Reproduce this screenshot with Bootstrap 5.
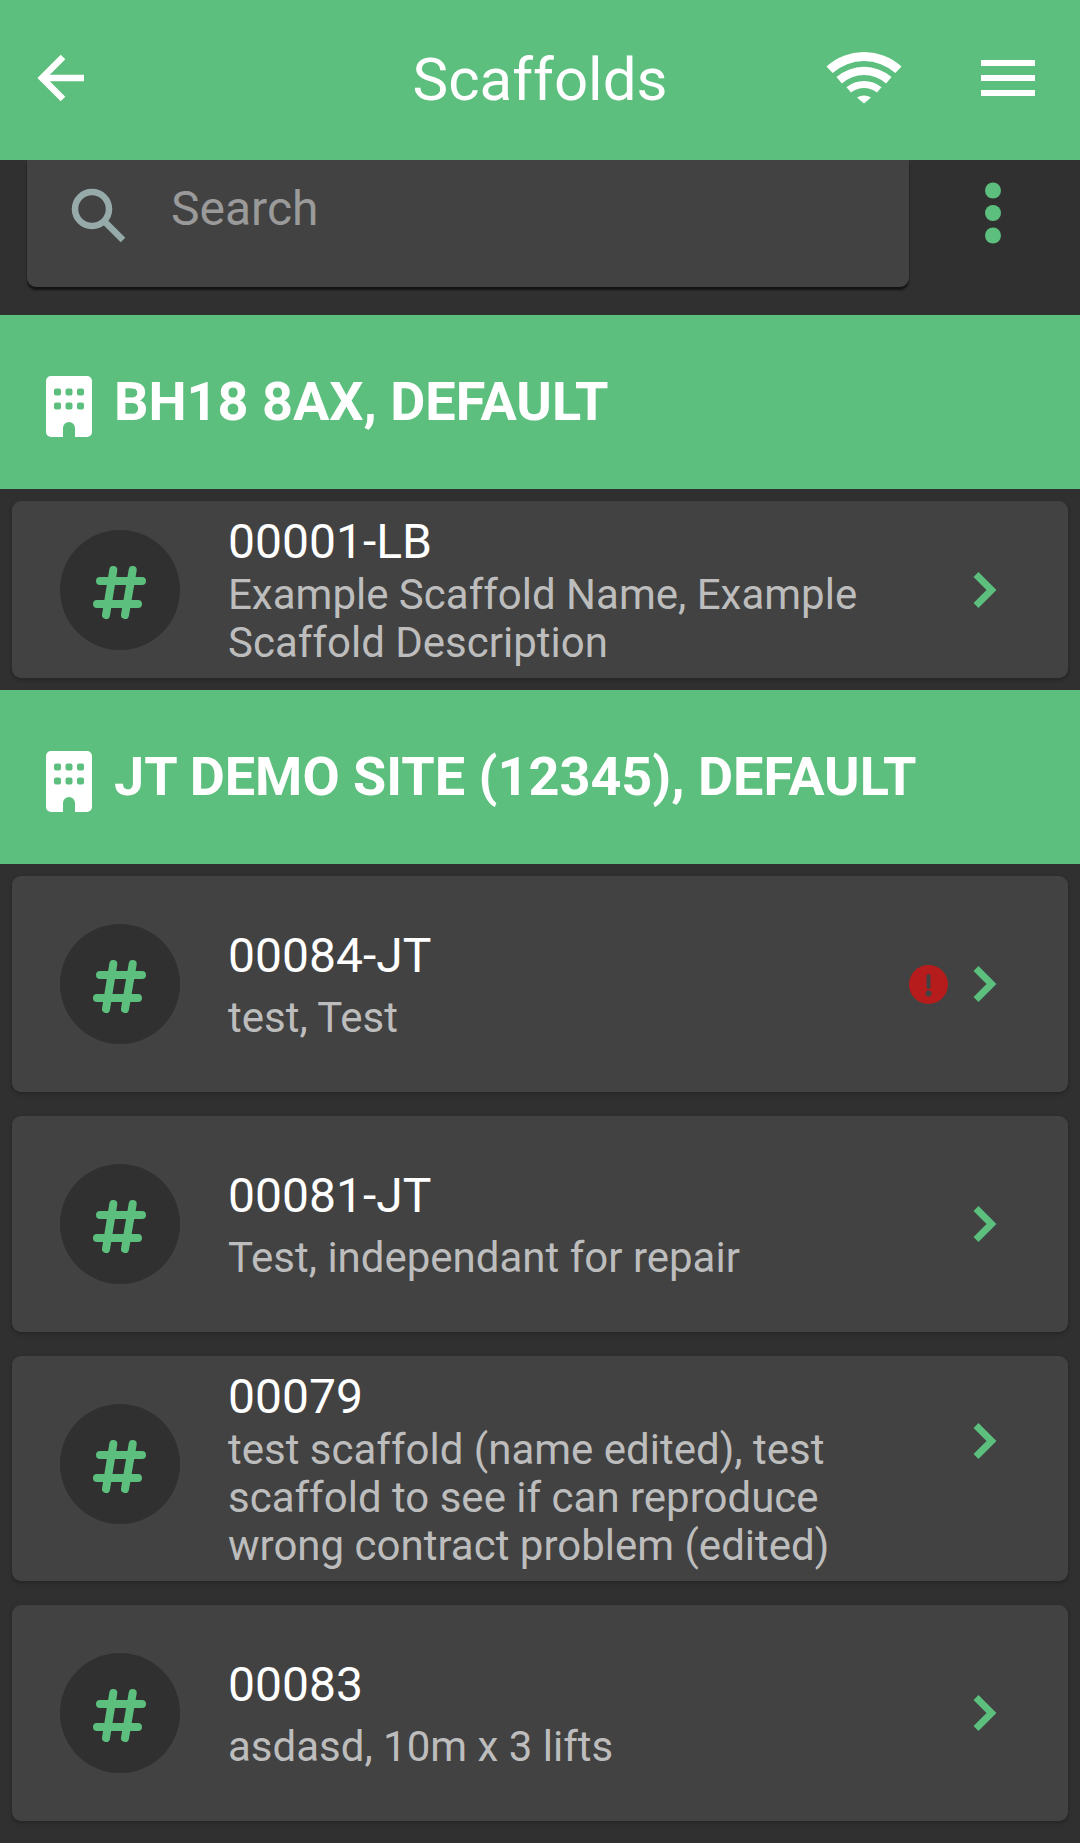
<!DOCTYPE html>
<html><head><meta charset="utf-8">
<link href="https://cdn.jsdelivr.net/npm/bootstrap@5.3.0/dist/css/bootstrap.min.css" rel="stylesheet">
<style>
body{background:#303030;font-family:Roboto,"Liberation Sans",sans-serif;color:#fff;width:1080px;height:1843px;overflow:hidden}
.app-head{height:160px;background:#5cbf7d;position:relative;z-index:2}
.app-title{font-size:60px;left:0;right:0;top:50px;line-height:60px;text-align:center;position:absolute}
.back-ic{position:absolute;left:32px;top:54px}
.wifi-ic{position:absolute;left:826px;top:52px}
.menu-ic{position:absolute;left:981px;top:60px}
.search-row{height:155px;padding:0 0 28px 27px}
.search-box{width:882px;height:127px;background:#424242;border-radius:0 0 9px 9px;box-shadow:0 3px 2px rgba(0,0,0,.6);font-size:48px;color:#9a9a9a;padding-left:144px;padding-top:22px;line-height:54px;position:relative}
.search-ic{position:absolute;left:43px;top:27px}
.dots-ic{position:absolute;left:984px;top:182px}
.site-band{height:174px;background:#5cbf7d;font-size:54px;font-weight:700;padding-left:46px;gap:22px}
.site-ic{margin-top:9px}
.site-label{padding-bottom:2px}
.site-list{padding:12px}
.job-card{background:#424242;border-radius:9px;box-shadow:0 2px 4px rgba(0,0,0,.25);margin-bottom:24px;padding:11px 71px 11px 48px;min-height:216px}
.site-list .job-card.tall{min-height:177px}
.site-list .job-card.last{margin-bottom:0}
.avatar{width:120px;height:120px;border-radius:50%;background:#303030;flex:none;margin-right:48px}
.avatar.raised{margin-top:-9px}
.job-name{font-size:48px;line-height:56px}
.job-desc{font-size:42px;line-height:48px;color:#bdbdbd;margin-top:1px}
.job-text{width:660px;padding-top:2px}
.job-desc.gap-line{margin-top:10px}
.alert-ic{margin-right:25px}
.chev-up{margin-bottom:56px}
</style></head><body>
<div class="app-head">
<svg class="back-ic" width="52" height="48" viewBox="0 0 52 48" fill="none" stroke="#fff" stroke-width="6.500"><path d="M52 24H9M31 3 10 24l21 21"/></svg>
<div class="app-title">Scaffolds</div>
<svg class="wifi-ic" width="76" height="52" viewBox="0 0 76 52" fill="#fff"><path d="M.5 14.400A56 56 0 0 1 75.500 14.400L69.400 21.100A47 47 0 0 0 6.600 21.100Z"/><path d="M10.500 25A42 42 0 0 1 65.500 25L60.100 31.500A33 33 0 0 0 15.900 31.500Z"/><path d="M20.500 35.200A28 28 0 0 1 55.500 35.200L51 40.400A21 21 0 0 0 25 40.400Z"/><path d="M31 45.400A14 14 0 0 1 45 45.400L38 51.500Z"/></svg>
<svg class="menu-ic" width="54" height="36" viewBox="0 0 54 36" fill="#fff"><rect width="54" height="6"/><rect y="15" width="54" height="6"/><rect y="30" width="54" height="6"/></svg>
</div>
<div class="search-row">
<div class="search-box">
<svg class="search-ic" width="56" height="56" viewBox="0 0 56 56" fill="none" stroke="#96aaaa" stroke-width="6.500"><circle cx="22" cy="22" r="17"/><path d="M34 34l19 19"/></svg>
Search</div>
</div>
<svg class="dots-ic" width="18" height="62" viewBox="0 0 18 62" fill="#5cbf7d"><circle cx="9" cy="8.500" r="8"/><circle cx="9" cy="31" r="8"/><circle cx="9" cy="53.500" r="8"/></svg>

<div class="site-band d-flex align-items-center">
<svg class="site-ic" width="46" height="61" viewBox="0 0 46 61"><path fill="#fff" fill-rule="evenodd" d="M5 0h36a5 5 0 0 1 5 5v51a5 5 0 0 1-5 5H29V52a6 6 0 0 0-12 0v9H5a5 5 0 0 1-5-5V5a5 5 0 0 1 5-5zM10 12.500a2 2 0 0 0-2 2v3a2 2 0 0 0 2 2h3a2 2 0 0 0 2-2v-3a2 2 0 0 0-2-2zM21.500 12.500a2 2 0 0 0-2 2v3a2 2 0 0 0 2 2h3a2 2 0 0 0 2-2v-3a2 2 0 0 0-2-2zM33 12.500a2 2 0 0 0-2 2v3a2 2 0 0 0 2 2h3a2 2 0 0 0 2-2v-3a2 2 0 0 0-2-2zM10 26.500a2 2 0 0 0-2 2v3a2 2 0 0 0 2 2h3a2 2 0 0 0 2-2v-3a2 2 0 0 0-2-2zM21.500 26.500a2 2 0 0 0-2 2v3a2 2 0 0 0 2 2h3a2 2 0 0 0 2-2v-3a2 2 0 0 0-2-2zM33 26.500a2 2 0 0 0-2 2v3a2 2 0 0 0 2 2h3a2 2 0 0 0 2-2v-3a2 2 0 0 0-2-2z"/></svg>
<span class="site-label">BH18 8AX, DEFAULT</span></div>
<div class="site-list">
<div class="job-card tall last d-flex align-items-center">
<div class="avatar d-flex align-items-center justify-content-center"><svg width="60" height="60" viewBox="0 0 60 60" fill="none" stroke="#5cbf7d" stroke-width="8" stroke-linecap="round"><path d="M10 21h42M7 44h41M23.300 10 16 55M42.700 10 35 55"/></svg></div>
<div class="job-text"><div class="job-name">00001-LB</div><div class="job-desc">Example Scaffold Name, Example Scaffold Description</div></div>
<svg class="ms-auto" width="24" height="36" viewBox="0 0 24 36" fill="none" stroke="#5cbf7d" stroke-width="7"><path d="M3 2.500l15.500 15.500L3 33.500"/></svg>
</div></div>

<div class="site-band d-flex align-items-center">
<svg class="site-ic" width="46" height="61" viewBox="0 0 46 61"><path fill="#fff" fill-rule="evenodd" d="M5 0h36a5 5 0 0 1 5 5v51a5 5 0 0 1-5 5H29V52a6 6 0 0 0-12 0v9H5a5 5 0 0 1-5-5V5a5 5 0 0 1 5-5zM10 12.500a2 2 0 0 0-2 2v3a2 2 0 0 0 2 2h3a2 2 0 0 0 2-2v-3a2 2 0 0 0-2-2zM21.500 12.500a2 2 0 0 0-2 2v3a2 2 0 0 0 2 2h3a2 2 0 0 0 2-2v-3a2 2 0 0 0-2-2zM33 12.500a2 2 0 0 0-2 2v3a2 2 0 0 0 2 2h3a2 2 0 0 0 2-2v-3a2 2 0 0 0-2-2zM10 26.500a2 2 0 0 0-2 2v3a2 2 0 0 0 2 2h3a2 2 0 0 0 2-2v-3a2 2 0 0 0-2-2zM21.500 26.500a2 2 0 0 0-2 2v3a2 2 0 0 0 2 2h3a2 2 0 0 0 2-2v-3a2 2 0 0 0-2-2zM33 26.500a2 2 0 0 0-2 2v3a2 2 0 0 0 2 2h3a2 2 0 0 0 2-2v-3a2 2 0 0 0-2-2z"/></svg>
<span class="site-label">JT DEMO SITE (12345), DEFAULT</span></div>
<div class="site-list">
<div class="job-card d-flex align-items-center">
<div class="avatar d-flex align-items-center justify-content-center"><svg width="60" height="60" viewBox="0 0 60 60" fill="none" stroke="#5cbf7d" stroke-width="8" stroke-linecap="round"><path d="M10 21h42M7 44h41M23.300 10 16 55M42.700 10 35 55"/></svg></div>
<div class="job-text"><div class="job-name">00084-JT</div><div class="job-desc gap-line">test, Test</div></div>
<svg class="ms-auto alert-ic" width="39" height="39" viewBox="0 0 39 39"><circle cx="19.500" cy="19.500" r="19.500" fill="#b71c1c"/><rect x="17.500" y="9" width="4" height="15" rx="2" fill="#424242"/><circle cx="19.500" cy="28.500" r="3" fill="#424242"/></svg>
<svg width="24" height="36" viewBox="0 0 24 36" fill="none" stroke="#5cbf7d" stroke-width="7"><path d="M3 2.500l15.500 15.500L3 33.500"/></svg>
</div>
<div class="job-card d-flex align-items-center">
<div class="avatar d-flex align-items-center justify-content-center"><svg width="60" height="60" viewBox="0 0 60 60" fill="none" stroke="#5cbf7d" stroke-width="8" stroke-linecap="round"><path d="M10 21h42M7 44h41M23.300 10 16 55M42.700 10 35 55"/></svg></div>
<div class="job-text"><div class="job-name">00081-JT</div><div class="job-desc gap-line">Test, independant for repair</div></div>
<svg class="ms-auto" width="24" height="36" viewBox="0 0 24 36" fill="none" stroke="#5cbf7d" stroke-width="7"><path d="M3 2.500l15.500 15.500L3 33.500"/></svg>
</div>
<div class="job-card d-flex align-items-center">
<div class="avatar raised d-flex align-items-center justify-content-center"><svg width="60" height="60" viewBox="0 0 60 60" fill="none" stroke="#5cbf7d" stroke-width="8" stroke-linecap="round"><path d="M10 21h42M7 44h41M23.300 10 16 55M42.700 10 35 55"/></svg></div>
<div class="job-text"><div class="job-name">00079</div><div class="job-desc">test scaffold (name edited), test scaffold to see if can reproduce wrong contract problem (edited)</div></div>
<svg class="ms-auto chev-up" width="24" height="36" viewBox="0 0 24 36" fill="none" stroke="#5cbf7d" stroke-width="7"><path d="M3 2.500l15.500 15.500L3 33.500"/></svg>
</div>
<div class="job-card last d-flex align-items-center">
<div class="avatar d-flex align-items-center justify-content-center"><svg width="60" height="60" viewBox="0 0 60 60" fill="none" stroke="#5cbf7d" stroke-width="8" stroke-linecap="round"><path d="M10 21h42M7 44h41M23.300 10 16 55M42.700 10 35 55"/></svg></div>
<div class="job-text"><div class="job-name">00083</div><div class="job-desc gap-line">asdasd, 10m x 3 lifts</div></div>
<svg class="ms-auto" width="24" height="36" viewBox="0 0 24 36" fill="none" stroke="#5cbf7d" stroke-width="7"><path d="M3 2.500l15.500 15.500L3 33.500"/></svg>
</div>
</div>
<script src="https://cdn.jsdelivr.net/npm/bootstrap@5.3.0/dist/js/bootstrap.bundle.min.js"></script>
</body></html>
